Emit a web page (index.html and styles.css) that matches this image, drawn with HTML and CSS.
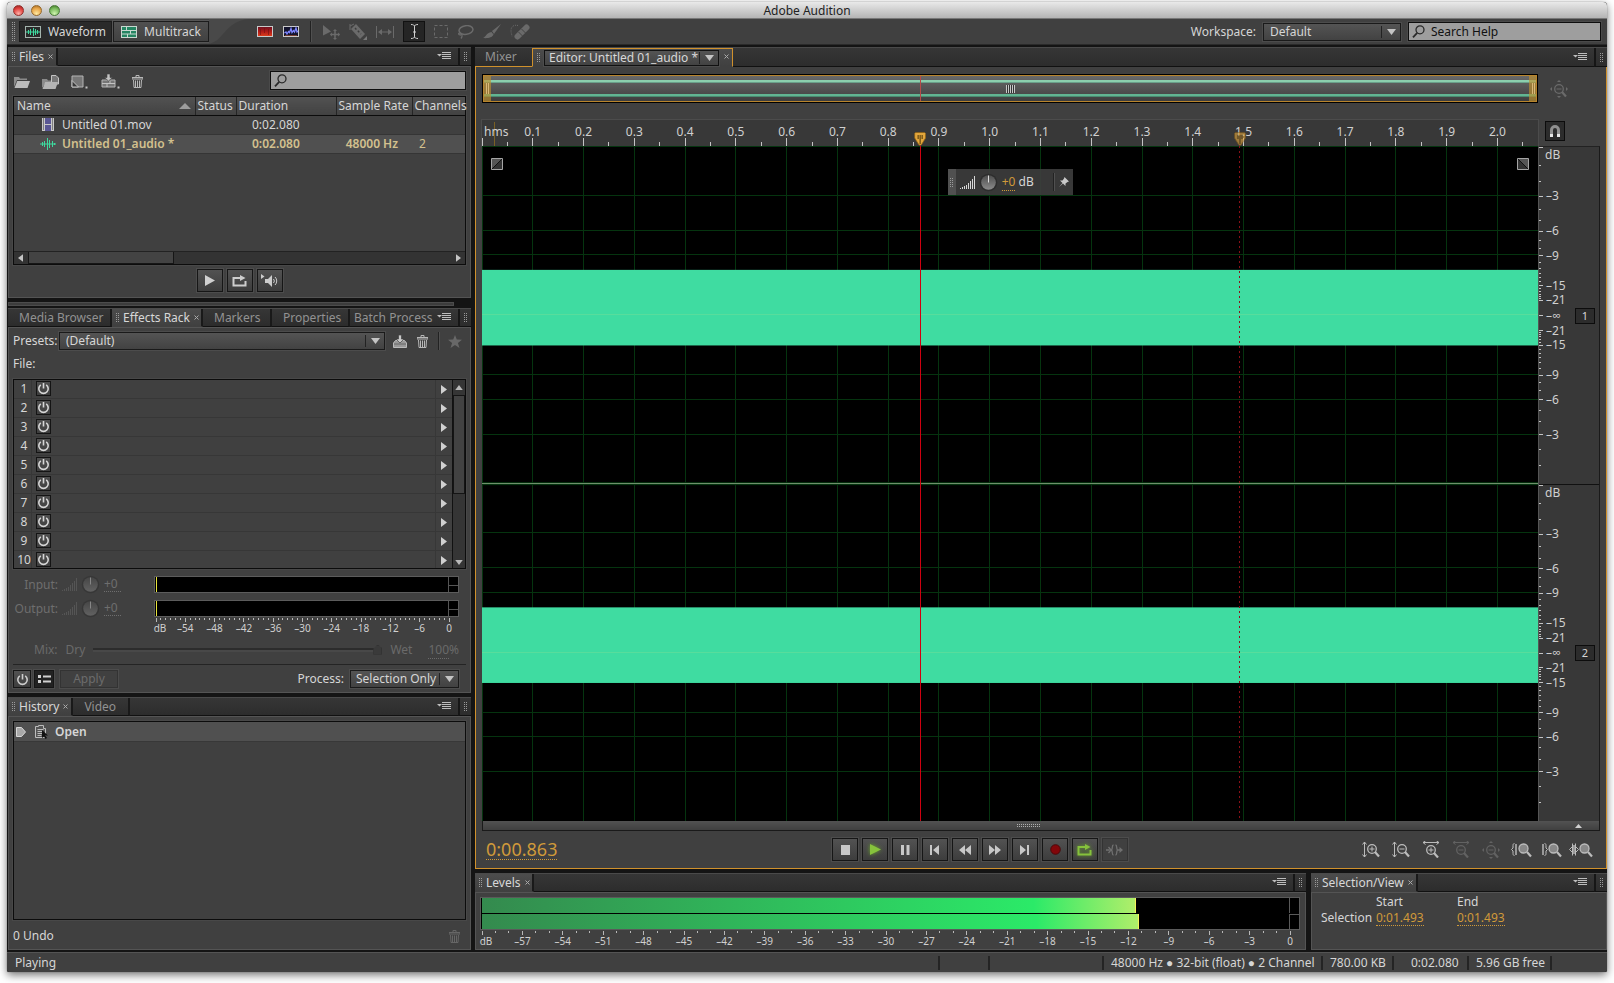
FILE: index.html
```html
<!DOCTYPE html>
<html lang="en">
<head>
<meta charset="utf-8">
<title>Adobe Audition</title>
<link rel="stylesheet" href="styles.css">
</head>
<body>
<svg class="sprite" aria-hidden="true">
  <defs>
    <linearGradient id="g-knob" x1="0" y1="0" x2="0" y2="1"><stop offset="0" stop-color="#4e4e4e"/><stop offset="1" stop-color="#8c8c8c"/></linearGradient>
    <linearGradient id="g-fire" x1="0" y1="0" x2="0" y2="1"><stop offset="0" stop-color="#6a1020"/><stop offset=".5" stop-color="#b01a18"/><stop offset="1" stop-color="#e0401c"/></linearGradient>
  </defs>
  <symbol id="i-menu" viewBox="0 0 14 8"><path d="M0 2h5L2.500 4.500z" fill="#bdbdbd"/><path d="M5 .5h9M5 2.500h9M5 4.500h9M5 6.500h9" stroke="#bdbdbd"/></symbol>
  <symbol id="i-down" viewBox="0 0 9 6"><path d="M0 0h9L4.500 6z" fill="currentColor"/></symbol>
  <symbol id="i-right" viewBox="0 0 6 9"><path d="M0 0v9L6 4.500z" fill="currentColor"/></symbol>
  <symbol id="i-left" viewBox="0 0 6 9"><path d="M6 0v9L0 4.500z" fill="currentColor"/></symbol>
  <symbol id="i-up" viewBox="0 0 9 6"><path d="M0 6h9L4.500 0z" fill="currentColor"/></symbol>
  <symbol id="i-close" viewBox="0 0 5 5"><path d="M.5.500l4 4M4.500.500l-4 4" stroke="currentColor" fill="none"/></symbol>
  <symbol id="i-search" viewBox="0 0 13 13"><circle cx="8" cy="4.800" r="4" fill="none" stroke="#2a2a2a" stroke-width="1.300"/><path d="M5.200 7.800L1 12.300" stroke="#2a2a2a" stroke-width="1.800"/></symbol>
  <symbol id="i-power" viewBox="0 0 13 13"><path d="M3.800 2.800a4.700 4.700 0 1 0 5.400 0" fill="none" stroke="currentColor" stroke-width="1.600"/><path d="M6.500 1v5.500" stroke="currentColor" stroke-width="1.600"/></symbol>
  <symbol id="i-trash" viewBox="0 0 11 13"><path d="M4 2V.5h3V2M0 2.500h11v1.500H0z" fill="none" stroke="currentColor"/><path d="M1.500 5l.5 7.500h7l.5-7.500" fill="none" stroke="currentColor"/><path d="M3.500 5.500v6.500M5.500 5.500v6.500M7.500 5.500v6.500" stroke="currentColor"/></symbol>
  <symbol id="i-wave" viewBox="0 0 16 12"><path d="M0 6h16" stroke="#3ddb9f"/><path d="M2.500 4v4M4.500 3v6M7.500 0v12M9.500 2v8M12.500 3v6M14.500 5v2" stroke="#3ddb9f"/></symbol>
  <symbol id="i-open" viewBox="0 0 16 13"><path d="M0 12V2h5l1 1.500h7V5H3z" fill="#8b8b8b"/><path d="M3.200 6H16l-2.500 7H.5z" fill="#bcbcbc"/></symbol>
  <symbol id="i-import" viewBox="0 0 17 14"><path d="M0 13V4h5l1 1.500h4V9H3z" fill="#8b8b8b"/><path d="M9.500.5H14l2.500 2.500V9h-7z" fill="#777" stroke="#c4c4c4"/><path d="M3.200 7H16l-2.500 7H.5z" fill="#b4b4b4"/></symbol>
  <symbol id="i-new" viewBox="0 0 18 14"><path d="M1 1h11v11H1z" fill="#777" stroke="#b4b4b4"/><path d="M1 5.500l6.500 6.500H1z" fill="#3a3a3a" stroke="#c4c4c4"/><path d="M14.500 11.500h2v2h-2z" fill="#c4c4c4"/></symbol>
  <symbol id="i-insert" viewBox="0 0 19 15"><path d="M1 6h13v7H1z" fill="#777" stroke="#b4b4b4"/><path d="M1 9.500h13M6 10v3M9 7v2" stroke="#c4c4c4"/><path d="M6 0h3v3.500h2.500L7.500 7 3.500 3.500H6z" fill="#c4c4c4" stroke="#404040" stroke-width=".6"/><path d="M16.500 12.500h2v2h-2z" fill="#c4c4c4"/></symbol>
  <symbol id="i-save" viewBox="0 0 14 13"><path d="M.5 8l2-2.500h9l2 2.500v4.500H.5z" fill="#999" stroke="#bbb"/><path d="M1 9h12" stroke="#666"/><path d="M5.500 0h3v4H11L7 8 3 4h2.500z" fill="#c8c8c8" stroke="#404040" stroke-width=".7"/></symbol>
  <symbol id="i-star" viewBox="0 0 14 13"><path d="M7 0l1.800 4.600 5.200.200-4.100 3.100L11.500 13 7 10.100 2.500 13l1.600-5.100L0 4.800l5.200-.200z" fill="#686868"/></symbol>
  <symbol id="i-film" viewBox="0 0 12 13"><path d="M0 0h12v13H0z" fill="#c9c9c9"/><path d="M3 0h6v6H3zM3 7h6v6H3z" fill="#5a5794"/><path d="M1.500 .5v12M10.500 .5v12" stroke="#333" stroke-dasharray="1 1"/></symbol>
  <symbol id="i-loop" viewBox="0 0 16 12"><path d="M5 3H1.500v7.500h12V6" fill="none" stroke="currentColor" stroke-width="2"/><path d="M5 3h5" stroke="currentColor" stroke-width="2"/><path d="M8 0l5.500 3L8 6z" fill="currentColor"/></symbol>
  <symbol id="i-speaker" viewBox="0 0 18 14"><path d="M0 0v5l3.500-2.500z" fill="currentColor"/><path d="M4 5h3l4-4v12L7 9H4z" fill="currentColor"/><path d="M12.500 5a3 3 0 0 1 0 4M14 3a5.500 5.500 0 0 1 0 8" fill="none" stroke="currentColor"/></symbol>
  <symbol id="i-vol" viewBox="0 0 15 13"><path d="M.5 12v1M2.500 11v2M4.500 10v3M6.500 9v4M8.500 7v6M10.500 5v8M12.500 3v10M14.500 0v13" stroke="currentColor"/></symbol>
  <symbol id="i-knob" viewBox="0 0 19 19"><circle cx="9.500" cy="9.500" r="8.800" fill="#2d2d2d"/><circle cx="9.500" cy="9.500" r="7.300" fill="url(#g-knob)"/><path d="M9.500 2.500v7" stroke="#ddd"/></symbol>
  <symbol id="i-fade" viewBox="0 0 12 12"><path d="M.5.500h11v11H.5z" fill="#333" stroke="#a5a5a5"/><path d="M1 1h10L1 11z" fill="#555"/><path d="M1 11L11 1" stroke="#111"/></symbol>
  <symbol id="i-zin" viewBox="0 0 18 17"><path d="M2.500 1v15M.500 3.500l2-2.500 2 2.500M.500 13.500l2 2.500 2-2.500" fill="none" stroke="currentColor"/><circle cx="10" cy="8" r="4.300" fill="none" stroke="currentColor" stroke-width="1.300"/><path d="M13 11l4 4.500" stroke="currentColor" stroke-width="2.200"/><path d="M7.500 8h5M10 5.500v5" stroke="currentColor"/></symbol>
  <symbol id="i-zout" viewBox="0 0 18 17"><path d="M2.500 1v15M.500 3.500l2-2.500 2 2.500M.500 13.500l2 2.500 2-2.500" fill="none" stroke="currentColor"/><circle cx="10" cy="8" r="4.300" fill="none" stroke="currentColor" stroke-width="1.300"/><path d="M13 11l4 4.500" stroke="currentColor" stroke-width="2.200"/><path d="M7.500 8h5" stroke="currentColor"/></symbol>
  <symbol id="i-hin" viewBox="0 0 18 17"><path d="M1 1.500h16M3.500 0L1 1.500 3.500 3.500M14.500 0L17 1.500l-2.500 2" fill="none" stroke="currentColor"/><circle cx="9" cy="9" r="4.300" fill="none" stroke="currentColor" stroke-width="1.300"/><path d="M12 12l4 4.500" stroke="currentColor" stroke-width="2.200"/><path d="M6.500 9h5M9 6.500v5" stroke="currentColor"/></symbol>
  <symbol id="i-hout" viewBox="0 0 18 17"><path d="M1 1.500h16M3.500 0L1 1.500 3.500 3.500M14.500 0L17 1.500l-2.500 2" fill="none" stroke="currentColor"/><circle cx="9" cy="9" r="4.300" fill="none" stroke="currentColor" stroke-width="1.300"/><path d="M12 12l4 4.500" stroke="currentColor" stroke-width="2.200"/><path d="M6.500 9h5" stroke="currentColor"/></symbol>
  <symbol id="i-zfull" viewBox="0 0 18 18"><path d="M9 0l2 2H7zM9 18l2-2H7zM0 9l2-2v4zM18 9l-2-2v4z" fill="currentColor"/><circle cx="9" cy="9" r="4.300" fill="none" stroke="currentColor" stroke-width="1.300"/><path d="M12 12l4 4.500" stroke="currentColor" stroke-width="2.200"/><path d="M6.500 9h5" stroke="currentColor"/></symbol>
  <symbol id="i-zsel1" viewBox="0 0 21 17"><path d="M3.500 2.500c-1 0-1.500.500-1.500 2v2.500L.5 8.500 2 10v2.500c0 1.500.5 2 1.500 2" stroke="currentColor" fill="none"/><path d="M4 3h2v11H4z" fill="#999"/><circle cx="12.500" cy="7.500" r="4.500" fill="#888" stroke="currentColor" stroke-width="1.300"/><path d="M16 11l4 4.500" stroke="currentColor" stroke-width="2.200"/></symbol>
  <symbol id="i-zsel2" viewBox="0 0 21 17"><path d="M3.500 2.500c1 0 1.500.500 1.500 2v2.500L6.500 8.500 5 10v2.500c0 1.500-.5 2-1.500 2" stroke="currentColor" fill="none"/><path d="M1 3h2v11H1z" fill="#999"/><circle cx="12.500" cy="7.500" r="4.500" fill="#888" stroke="currentColor" stroke-width="1.300"/><path d="M16 11l4 4.500" stroke="currentColor" stroke-width="2.200"/></symbol>
  <symbol id="i-zsel3" viewBox="0 0 24 17"><path d="M3.500 2.500v12M6.500 2.500v12M3 6L.5 8.500 3 11M7 6l2.500 2.500L7 11" stroke="currentColor" fill="none"/><path d="M4 4h2v9H4z" fill="#999"/><circle cx="15.500" cy="7.500" r="4.500" fill="#888" stroke="currentColor" stroke-width="1.300"/><path d="M19 11l4 4.500" stroke="currentColor" stroke-width="2.200"/></symbol>
  <symbol id="i-marker" viewBox="0 0 12 14"><path d="M1.500.500h9l1 1V6L7.500 12.500l-1.500 1-1.500-1L.5 6V1.500z" fill="#e2a63c" stroke="#8a5f14" stroke-width=".8"/><path d="M4 3v4M6 3v9M8 3v4" stroke="#4a3408"/></symbol>
</svg>

<div class="window">
  <header class="titlebar">
    <span class="lights"><i class="light red"></i><i class="light amber"></i><i class="light green"></i></span>
    <h1>Adobe Audition</h1>
  </header>

  <div class="toolbar">
    <div class="modes">
      <i class="grip tall"></i>
      <button class="mode on"><svg width="16" height="12"><rect x=".5" y=".5" width="15" height="11" fill="none" stroke="#a5b5ae"/><path d="M1 6h14" stroke="#3ddb9f"/><path d="M3.500 4v4M5.500 3v6M8.500 2v8M10.500 3v6M12.500 4v4" stroke="#3ddb9f"/></svg>Waveform</button>
      <button class="mode"><svg width="16" height="12"><path d="M0 0h16v12H0z" fill="#c8d8d0"/><path d="M1 1h4v3H1zM6 1h9v3H6zM1 5h8v2.500H1zM10 5h5v2.500h-5zM1 8.500h5V11H1zM7 8.500h8V11H7z" fill="#258562"/></svg>Multitrack</button>
    </div>
    <svg class="swoosh" width="40" height="25"><path d="M0 25C16 21 16 2 40 0H0z" fill="#494949"/></svg>
    <button class="tool" aria-label="Spectral frequency"><svg width="16" height="11"><rect x=".5" y=".5" width="15" height="10" fill="url(#g-fire)" stroke="#c9c9c9"/><path d="M3.500 3v6M7.500 2v5M11.500 3v6" stroke="#701010" stroke-opacity=".6"/></svg></button>
    <button class="tool wide" aria-label="Spectral pitch"><svg width="16" height="11"><rect x=".5" y=".5" width="15" height="10" fill="#14142e" stroke="#c9c9c9"/><path d="M1.500 7l1.500-1 1 2 1.500-2.500 1 1 1.500-4 1 4 1.500-2 1 1.500 1.500-4 1 4 1-1" fill="none" stroke="#7e86ff" stroke-width="1.300"/><path d="M2 9.500h12" stroke="#a05030" stroke-opacity=".7"/></svg></button>
    <i class="vsep"></i>
    <div class="tools">
      <button class="tool" aria-label="Move"><svg width="18" height="16"><path d="M1 1l8 6.500-8 4z" fill="#6a6a6a"/><path d="M13 6v9M8.500 10.500h9" stroke="#6a6a6a" stroke-width="1.500"/><path d="M13 5l2 2h-4zM13 16l2-2h-4zM8 10.500l2-2v4zM18 10.500l-2-2v4z" fill="#6a6a6a"/></svg></button>
      <button class="tool" aria-label="Razor"><svg width="18" height="17"><path d="M1 1v6M1 3l4-2" stroke="#6a6a6a"/><path d="M7 1l9 10-5 5-9-10z" fill="#6a6a6a"/><path d="M6 5l6 6" stroke="#3c3c3c" stroke-width="1.500" stroke-dasharray="2 2"/><path d="M18 13v4h-4z" fill="#777"/></svg></button>
      <button class="tool" aria-label="Time selection"><svg width="18" height="12"><path d="M.5 0v12M17.500 0v12M3 6h12" stroke="#6a6a6a"/><path d="M2 6l4-3v6zM16 6l-4-3v6z" fill="#6a6a6a"/></svg></button>
      <button class="tool on" aria-label="Text cursor"><svg width="9" height="15"><path d="M1 .500c2.500 0 3.500.800 3.500 2v10c0 1.200-1 2-3.500 2M8 .500c-2.500 0-3.500.800-3.500 2v10c0 1.200 1 2 3.500 2M3 8h3" fill="none" stroke="#d2d2d2"/></svg></button>
      <button class="tool" aria-label="Marquee"><svg width="14" height="13"><rect x=".5" y=".5" width="13" height="12" fill="none" stroke="#6a6a6a" stroke-dasharray="3 2"/></svg></button>
      <button class="tool" aria-label="Lasso"><svg width="17" height="14"><ellipse cx="9" cy="5" rx="7" ry="4.300" fill="none" stroke="#6a6a6a" stroke-width="1.500" transform="rotate(-8 9 5)"/><path d="M3 8c2 1 3 3 1 5.500M3 8c-2 0-2 2 1 2" fill="none" stroke="#6a6a6a" stroke-width="1.300"/></svg></button>
      <button class="tool" aria-label="Paintbrush"><svg width="18" height="15"><path d="M18 0L9 7l2 3z" fill="#6a6a6a"/><path d="M8.500 8l2 2.500C9 14 4 14.500 0 14c3-1 3-5 8.500-6z" fill="#6a6a6a"/></svg></button>
      <button class="tool" aria-label="Spot healing"><svg width="20" height="16"><path d="M7.500 12.500L16.500 3.500" stroke="#6a6a6a" stroke-width="6" stroke-linecap="round"/><path d="M8.500 8l4 4M11.500 5l4 4" stroke="#444"/><path d="M8 1.500c-4-1-7 1-7 5 0 3 1 4 1 6" fill="none" stroke="#6a6a6a" stroke-dasharray="1 1"/></svg></button>
    </div>
    <label class="ws-label" for="ws">Workspace:</label>
    <span class="sel ws"><select id="ws"><option>Default</option></select><svg width="9" height="6"><use href="#i-down"/></svg></span>
    <span class="search help"><svg width="13" height="13"><use href="#i-search"/></svg><input type="text" value="Search Help" aria-label="Search Help"></span>
  </div>

  <main class="workspace">
    <div class="side">
      <section class="panel files">
        <div class="tabbar"><a class="tab on" href="#files"><i class="grip"></i>Files<svg width="5" height="5"><use href="#i-close"/></svg></a><span class="fill"></span><button class="pmenu" aria-label="Panel menu"><svg width="14" height="8"><use href="#i-menu"/></svg></button><span class="endgrip"><i class="grip"></i></span></div>
        <div class="pbody" id="files">
          <div class="filetools">
            <button aria-label="Open"><svg width="16" height="13"><use href="#i-open"/></svg></button>
            <button aria-label="Import"><svg width="17" height="14"><use href="#i-import"/></svg></button>
            <button aria-label="New"><svg width="18" height="14"><use href="#i-new"/></svg></button>
            <button aria-label="Insert"><svg width="19" height="15"><use href="#i-insert"/></svg></button>
            <button aria-label="Delete"><svg width="11" height="13"><use href="#i-trash"/></svg></button>
            <span class="search"><svg width="13" height="13"><use href="#i-search"/></svg><input type="text" aria-label="Search files"></span>
          </div>
          <div class="well filelist">
            <table>
              <colgroup><col class="c-name"><col class="c-status"><col class="c-dur"><col class="c-rate"><col></colgroup>
              <thead><tr><th><span class="sorted">Name<svg width="12" height="6"><path d="M0 6h12L6 0z" fill="#9c9c9c"/></svg></span></th><th>Status</th><th>Duration</th><th>Sample Rate</th><th>Channels</th></tr></thead>
              <tbody>
                <tr><td><span class="fname"><svg width="12" height="13"><use href="#i-film"/></svg>Untitled 01.mov</span></td><td></td><td>0:02.080</td><td></td><td></td></tr>
                <tr class="sel-row"><td><span class="fname"><svg width="16" height="12"><use href="#i-wave"/></svg><b>Untitled 01_audio *</b></span></td><td></td><td><b>0:02.080</b></td><td><b>48000 Hz</b></td><td>2</td></tr>
              </tbody>
            </table>
            <div class="hscroll"><svg width="5" height="8"><use href="#i-left"/></svg><i class="thumb"></i><svg width="5" height="8"><use href="#i-right"/></svg></div>
          </div>
          <div class="playrow">
            <button class="btn" aria-label="Play"><svg width="10" height="11"><path d="M0 0v11l10-5.500z" fill="#d0d0d0"/></svg></button>
            <button class="btn" aria-label="Loop"><svg width="16" height="12"><use href="#i-loop"/></svg></button>
            <button class="btn" aria-label="Auto-play"><svg width="18" height="14"><use href="#i-speaker"/></svg></button>
          </div>
        </div>
      </section>
      <div class="tabscroll"><i></i></div>

      <section class="panel rack">
        <div class="tabbar"><a class="tab t-mb" href="#rack">Media Browser</a><a class="tab on" href="#rack"><i class="grip"></i>Effects Rack<svg width="5" height="5"><use href="#i-close"/></svg></a><a class="tab t-mk" href="#rack">Markers</a><a class="tab t-pr" href="#rack">Properties</a><a class="tab t-bp" href="#rack">Batch Process</a><button class="pmenu" aria-label="Panel menu"><svg width="14" height="8"><use href="#i-menu"/></svg></button><span class="endgrip"><i class="grip"></i></span></div>
        <div class="pbody" id="rack">
          <div class="presets">
            <label for="pre">Presets:</label>
            <span class="sel"><select id="pre"><option>(Default)</option></select><svg width="9" height="6"><use href="#i-down"/></svg></span>
            <button aria-label="Save preset"><svg width="14" height="13"><use href="#i-save"/></svg></button>
            <button aria-label="Delete preset"><svg width="11" height="13"><use href="#i-trash"/></svg></button>
            <i class="vsep"></i>
            <button aria-label="Favorite"><svg width="14" height="13"><use href="#i-star"/></svg></button>
          </div>
          <p class="file-label">File:</p>
          <div class="well slots">
            <ol id="slots"></ol>
            <div class="vscroll"><svg width="8" height="5"><use href="#i-up"/></svg><i class="thumb"></i><svg width="8" height="5"><use href="#i-down"/></svg></div>
          </div>
          <div class="gains">
            <span class="glabel">Input:</span><svg class="dim" width="15" height="13"><use href="#i-vol"/></svg><svg class="dimknob" width="19" height="19"><use href="#i-knob"/></svg><span class="dots">+0</span><div class="meter"><i></i><i></i><i></i><i></i></div>
            <span class="glabel">Output:</span><svg class="dim" width="15" height="13"><use href="#i-vol"/></svg><svg class="dimknob" width="19" height="19"><use href="#i-knob"/></svg><span class="dots">+0</span><div class="meter"><i></i><i></i><i></i><i></i></div>
            <svg class="scale rackscale" id="rackscale"></svg>
          </div>
          <div class="mix"><label for="mix">Mix:</label><span>Dry</span><input id="mix" type="range" value="100" disabled><span>Wet</span><span class="pct"><span class="dots">100</span>%</span></div>
          <div class="applyrow">
            <button class="btn sq" aria-label="Power"><svg width="13" height="13"><use href="#i-power"/></svg></button>
            <button class="btn sq on" aria-label="List view"><svg width="13" height="8"><path d="M0 0h3v3H0zM0 5h3v3H0zM5 .500h8v2H5zM5 5.500h8v2H5z" fill="#d0d0d0"/></svg></button>
            <button class="btn apply" disabled>Apply</button>
            <label for="proc">Process:</label>
            <span class="sel proc"><select id="proc"><option>Selection Only</option></select><svg width="9" height="6"><use href="#i-down"/></svg></span>
          </div>
        </div>
      </section>

      <section class="panel history">
        <div class="tabbar"><a class="tab on" href="#hist"><i class="grip"></i>History<svg width="5" height="5"><use href="#i-close"/></svg></a><a class="tab t-vd" href="#hist">Video</a><span class="fill"></span><button class="pmenu" aria-label="Panel menu"><svg width="14" height="8"><use href="#i-menu"/></svg></button><span class="endgrip"><i class="grip"></i></span></div>
        <div class="pbody" id="hist">
          <div class="well histlist">
            <div class="hrow"><svg width="10" height="10"><path d="M.5.500h5l4 4.500-4 4.500h-5z" fill="#a8a8a8" stroke="#d8d8d8"/></svg><svg width="13" height="14"><path d="M.5 1.500h3v-1h5v3h2v9H.5z" fill="#555" stroke="#bdbdbd"/><path d="M2.500 4.500h6M2.500 6.500h5M2.500 8.500h5M2.500 10.500h4" stroke="#bdbdbd"/><path d="M7 5v8l2-1.500L10.500 14l1.500-1-1.500-2.500H13z" fill="#111"/></svg><b>Open</b></div>
          </div>
          <div class="undo"><span>0 Undo</span><svg width="11" height="13"><use href="#i-trash"/></svg></div>
        </div>
      </section>
    </div>

    <div class="center">
      <section class="panel editor">
        <div class="tabbar"><a class="tab t-mx" href="#ed">Mixer</a><div class="tab on edtab"><i class="grip"></i><span class="sel"><select aria-label="Editor file"><option>Editor: Untitled 01_audio *</option></select><svg width="9" height="6"><use href="#i-down"/></svg></span><svg width="5" height="5"><use href="#i-close"/></svg></div><span class="fill"></span><button class="pmenu" aria-label="Panel menu"><svg width="14" height="8"><use href="#i-menu"/></svg></button><span class="endgrip"><i class="grip"></i></span></div>
        <div class="pbody" id="ed">
          <div class="edgrid">
            <div class="overview">
              <i class="handle"></i><i class="ograb"></i><i class="handle"></i>
              <i class="ohead"></i>
            </div>
            <button class="zoomall" aria-label="Zoom out full"><svg width="18" height="18"><use href="#i-zfull"/></svg></button>
            <svg class="ruler" id="ruler"></svg>
            <button class="snap" aria-label="Snap"><svg width="10" height="12"><path d="M1.500 9V5a3.500 3.500 0 0 1 7 0v4" fill="none" stroke="#909090" stroke-width="3"/><path d="M0 9h3v3H0zM7 9h3v3H7z" fill="#e8e8e8"/></svg></button>
            <div class="waves">
              <svg class="grid" id="grid"></svg>
              <svg class="fade l" width="12" height="12"><use href="#i-fade"/></svg>
              <svg class="fade r" width="12" height="12"><use href="#i-fade"/></svg>
              <div class="hud"><span class="hgrip"><i class="grip"></i></span><svg width="15" height="13"><use href="#i-vol"/></svg><svg width="19" height="19"><use href="#i-knob"/></svg><span><span class="dots gold">+0</span> dB</span><i class="vsep"></i><svg width="10" height="10"><path d="M5.500 0L10 4.500l-1.500.5L6.500 6.500 6.500 9 4 6.500 0 10 3.500 6 1 3.500h2.500L5 1.500z" fill="#c8c8c8"/></svg></div>
            </div>
            <div class="dbcol">
              <div class="dbch"><svg class="dbs"></svg><button>1</button></div>
              <div class="dbch"><svg class="dbs"></svg><button>2</button></div>
            </div>
            <div class="wscroll"><i></i><svg width="7" height="4"><path d="M0 4h7L3.500 0z" fill="#d0d0d0"/></svg></div>
          </div>
          <div class="transport">
            <output class="time"><span class="dots gold">0:00.863</span></output>
            <div class="tbtns">
              <button class="btn" aria-label="Stop"><svg width="9" height="10"><path d="M0 0h9v10H0z" fill="#c8c8c8"/></svg></button>
              <button class="btn" aria-label="Play"><svg class="glow" width="11" height="11"><path d="M0 0v11l11-5.500z" fill="#86c23c"/></svg></button>
              <button class="btn" aria-label="Pause"><svg width="9" height="10"><path d="M0 0h3v10H0zM5.500 0h3v10h-3z" fill="#c8c8c8"/></svg></button>
              <button class="btn" aria-label="To start"><svg width="10" height="10"><path d="M0 0h2v10H0zM9 0v10L3 5z" fill="#c8c8c8"/></svg></button>
              <button class="btn" aria-label="Rewind"><svg width="12" height="10"><path d="M6 0v10L0 5zM12 0v10L6 5z" fill="#c8c8c8"/></svg></button>
              <button class="btn" aria-label="Forward"><svg width="12" height="10"><path d="M0 0v10l6-5zM6 0v10l6-5z" fill="#c8c8c8"/></svg></button>
              <button class="btn" aria-label="To end"><svg width="10" height="10"><path d="M0 0v10l6-5zM7 0h2v10H7z" fill="#c8c8c8"/></svg></button>
              <button class="btn" aria-label="Record"><svg width="11" height="11"><circle cx="5.500" cy="5.500" r="4.800" fill="#82060a" stroke="#4a0a0c"/></svg></button>
              <button class="btn lit" aria-label="Loop playback"><svg class="glow" width="16" height="12"><use href="#i-loop"/></svg></button>
              <button class="btn off" aria-label="Skip selection" disabled><svg width="18" height="12"><path d="M0 6h3.500M2.500 3L5 6 2.500 9M7.500 1c-2 0-.5 3.500-2 5 1.500 1.500 0 5 2 5M9.500 1c2 0 .5 3.500 2 5-1.500 1.500 0 5-2 5M12 6h3" stroke="#707070" fill="none" stroke-width="1.300"/><path d="M13.500 3L17 6l-3.500 3z" fill="#707070"/></svg></button>
            </div>
            <div class="zooms">
              <button aria-label="Zoom in amplitude"><svg width="18" height="17"><use href="#i-zin"/></svg></button>
              <button aria-label="Zoom out amplitude"><svg width="18" height="17"><use href="#i-zout"/></svg></button>
              <button aria-label="Zoom in time"><svg width="18" height="17"><use href="#i-hin"/></svg></button>
              <button class="off" aria-label="Zoom out time"><svg width="18" height="17"><use href="#i-hout"/></svg></button>
              <button class="off" aria-label="Zoom out full"><svg width="18" height="18"><use href="#i-zfull"/></svg></button>
              <button aria-label="Zoom to in point"><svg width="21" height="17"><use href="#i-zsel1"/></svg></button>
              <button aria-label="Zoom to out point"><svg width="21" height="17"><use href="#i-zsel2"/></svg></button>
              <button aria-label="Zoom to selection"><svg width="24" height="17"><use href="#i-zsel3"/></svg></button>
            </div>
          </div>
        </div>
      </section>

      <div class="bottom">
        <section class="panel levels">
          <div class="tabbar"><a class="tab on" href="#lev"><i class="grip"></i>Levels<svg width="5" height="5"><use href="#i-close"/></svg></a><span class="fill"></span><button class="pmenu" aria-label="Panel menu"><svg width="14" height="8"><use href="#i-menu"/></svg></button><span class="endgrip"><i class="grip"></i></span></div>
          <div class="pbody" id="lev">
            <div class="lmeter"><div class="bar"><i style="width:81%"></i></div><b></b><div class="bar"><i style="width:81.4%"></i></div><b></b></div>
            <svg class="scale levscale" id="levscale"></svg>
          </div>
        </section>
        <section class="panel selview">
          <div class="tabbar"><a class="tab on" href="#sv"><i class="grip"></i>Selection/View<svg width="5" height="5"><use href="#i-close"/></svg></a><span class="fill"></span><button class="pmenu" aria-label="Panel menu"><svg width="14" height="8"><use href="#i-menu"/></svg></button><span class="endgrip"><i class="grip"></i></span></div>
          <div class="pbody" id="sv">
            <div class="svgrid"><span></span><span class="svh">Start</span><span>End</span><span>Selection</span><span class="dots gold">0:01.493</span><span class="dots gold">0:01.493</span></div>
          </div>
        </section>
      </div>
    </div>
  </main>

  <footer class="status"><span class="st-main">Playing</span><span class="st s1"></span><span class="st s2"></span><span class="st s3">48000 Hz ● 32-bit (float) ● 2 Channel</span><span class="st s4">780.00 KB</span><span class="st s5">0:02.080</span><span class="st s6">5.96 GB free</span><span class="st s7"></span></footer>
</div>
<script src="app.js"></script>
</body>
</html>
```

FILE: styles.css
```css
* { box-sizing: border-box; }
html { height: 100%; background: #fff; }
body {
  margin: 0; height: 100%; padding: 2px 7px 11px;
  font: 12px/14px "Noto Sans", "Open Sans", sans-serif; color: #d6d6d6;
}
button, select, input { font: inherit; color: inherit; margin: 0; padding: 0; }
button { background: none; border: 0; display: flex; align-items: center; justify-content: center; }
input, select { outline: 0; }
a { color: inherit; text-decoration: none; }
svg { display: block; flex: none; }
p { margin: 0; }
.sprite { position: absolute; width: 0; height: 0; }

.window {
  height: 100%; min-height: 900px; min-width: 1300px; display: flex; flex-direction: column;
  background: #141414; border-radius: 4px 4px 2px 2px; overflow: clip;
  box-shadow: 0 0 1px #555, 0 3px 8px rgba(0, 0, 0, .55);
}
.titlebar {
  height: 17px; flex: none; display: grid; grid-template-columns: 1fr auto 1fr; align-items: center;
  background: linear-gradient(#e9e9e9, #b4b4b4); border-bottom: 1px solid #777; color: #222;
}
.titlebar h1 { margin: 0; padding-top: 1px; font-size: 12px; font-weight: 400; line-height: 16px; }
.lights { display: flex; gap: 7px; padding-left: 6px; }
.light { width: 11px; height: 11px; border-radius: 50%; border: 1px solid #555; }
.red { background: radial-gradient(circle at 50% 85%, #ffb0a8, #e0403c 60%, #8a2320); border-color: #94302c; }
.amber { background: radial-gradient(circle at 50% 85%, #ffe9a0, #e8a548 60%, #9a6420); border-color: #94682c; }
.green { background: radial-gradient(circle at 50% 85%, #d0f5b0, #78b95c 60%, #3c7020); border-color: #4a7a3a; }

.toolbar { height: 26px; flex: none; display: flex; align-items: center; background: #404040; border-bottom: 1px solid #2a2a2a; padding-right: 6px; }
.modes { display: flex; align-items: center; align-self: stretch; background: linear-gradient(#414141, #494949); padding-left: 5px; gap: 1px; }
.mode { height: 21px; gap: 7px; border: 1px solid #1c1c1c; background: linear-gradient(#505050, #414141); width: 96px; box-shadow: 0 0 0 1px #555; }
.mode.on { background: #2a2a2a; width: 93px; box-shadow: none; }
.swoosh { margin-right: 8px; }
.tool { height: 21px; flex: none; }
.tool.wide { margin-left: 10px; }
.vsep { width: 2px; height: 18px; flex: none; background: #222; border-right: 1px solid #505050; }
.toolbar > .vsep { margin: 0 10px 0 11px; height: 21px; }
.tools { display: flex; gap: 9px; align-items: center; }
.tool.on { width: 22px; background: #252525; border: 1px solid #111; }
.ws-label { margin: 0 7px 0 auto; }
.ws { width: 138px; }
.search { display: flex; align-items: center; height: 19px; background: #9e9e9e; border: 1px solid #0e0e0e; box-shadow: 0 0 0 1px #4a4a4a; padding-left: 3px; gap: 6px; }
.search input { flex: 1; min-width: 0; border: 0; background: none; color: #111; }
.help { width: 193px; margin-left: 7px; }

.sel { display: grid; height: 18px; align-items: center; background: linear-gradient(#545454, #424242); border: 1px solid #1a1a1a; box-shadow: 0 0 0 1px #4c4c4c; }
.sel select { grid-area: 1 / 1; appearance: none; border: 0; background: none; width: 100%; height: 16px; padding: 0 22px 0 6px; line-height: 16px; }
.sel option { background: #404040; }
.sel > svg { grid-area: 1 / 1; justify-self: end; box-sizing: content-box; padding: 3px 4px 3px 5px; border-left: 1px solid #222; color: #c4c4c4; pointer-events: none; }

.grip { width: 3px; height: 9px; flex: none; background: conic-gradient(at 1px 1px, transparent 75%, #9a9a9a 0) 0 0 / 2px 2px; }
.grip.tall { width: 4px; height: 19px; margin-right: 2px; }

.workspace { flex: 1; min-height: 0; display: grid; grid-template-columns: minmax(463px, 28%) minmax(0, 1fr); gap: 4px; padding: 2px 0 2px 1px; }
.side { display: flex; flex-direction: column; min-width: 0; min-height: 0; }
.center { display: flex; flex-direction: column; gap: 4px; min-width: 0; min-height: 0; }
.panel { display: flex; flex-direction: column; min-width: 0; }
.pbody { flex: 1; background: #404040; border: 1px solid #545454; min-height: 0; display: flex; flex-direction: column; }
.tabbar { display: flex; height: 19px; flex: none; background: linear-gradient(#363636, #2c2c2c); border-top: 1px solid #4a4a4a; }
.tab { display: flex; align-items: center; padding: 0 11px; color: #929292; border-right: 2px solid #191919; border-bottom: 1px solid #111; white-space: nowrap; background: linear-gradient(#363636, #2c2c2c); line-height: 16px; }
.tab.on { color: #d8d8d8; background: linear-gradient(#4c4c4c, #404040); border-bottom-color: #404040; padding: 0 3px 0 4px; gap: 4px; }
.tab.on > svg { color: #aaa; }
.fill { flex: 1; border-bottom: 1px solid #111; }
.pmenu { width: 27px; flex: none; border-bottom: 1px solid #111; padding: 0 1px 1px 0; }
.endgrip { width: 13px; flex: none; display: flex; align-items: center; justify-content: center; border-left: 2px solid #161616; border-bottom: 1px solid #111; }
.well { border: 1px solid #0c0c0c; background: #404040; box-shadow: 0 0 0 1px #484848; }
.btn { width: 26px; height: 23px; background: linear-gradient(#525252, #3d3d3d); border: 1px solid #161616; box-shadow: 0 0 0 1px #4c4c4c; color: #cdcdcd; }
.btn.lit { color: #86c23c; }

.files { height: 251px; flex: none; }
.files .pbody { padding: 0 4px; }
.filetools { display: flex; align-items: center; height: 29px; flex: none; gap: 12px; padding-left: 1px; color: #b8b8b8; }
.filetools .search { width: 196px; margin-left: auto; margin-bottom: 2px; }
.filelist { height: 169px; flex: none; display: flex; flex-direction: column; justify-content: space-between; }
table { width: 100%; table-layout: fixed; border-collapse: collapse; }
.c-name { width: 181px; } .c-status { width: 41px; } .c-dur { width: 100px; } .c-rate { width: 76px; }
th { text-align: left; font-weight: 400; height: 18px; padding: 0 0 0 3px; white-space: nowrap; background: linear-gradient(#525252, #424242); border-bottom: 1px solid #0c0c0c; line-height: 14px; }
th + th { border-left: 1px solid #252525; padding-left: 2px; }
.sorted { display: flex; align-items: center; justify-content: space-between; padding-right: 4px; }
td { height: 19px; padding: 0; line-height: 16px; border-bottom: 1px solid #353535; white-space: nowrap; }
td:nth-child(3) { padding-left: 16px; }
td:nth-child(4) { text-align: right; padding-right: 14px; }
td:nth-child(5) { padding-left: 7px; }
.fname { display: grid; grid-template-columns: 16px auto; gap: 6px; align-items: center; justify-items: center; justify-content: start; padding-left: 26px; }
.sel-row { background: #505050; color: #d3c08e; }
b { font-weight: 600; }
.hscroll { height: 13px; display: flex; align-items: center; background: #333; border-top: 1px solid #222; padding: 0 4px; color: #c4c4c4; }
.hscroll .thumb { width: 33%; height: 12px; margin: 0 auto 0 5px; background: #434343; border: 1px solid #161616; border-top: 0; }
.playrow { display: flex; justify-content: center; gap: 4px; padding-top: 4px; }
.tabscroll { height: 10px; flex: none; padding: 4px 17px 2px 0; }
.tabscroll i { display: block; height: 4px; background: #3c3c3c; border: 1px solid #4c4c4c; }

.rack { flex: none; }
.rack .pbody { padding: 4px 4px 4px; }
.t-mb { width: 104px; } .rack .tab.on { width: 91px; } .t-mk { width: 69px; } .t-pr { width: 78px; }
.t-bp { flex: 1; min-width: 0; padding: 0 0 0 4px; border-right: 0; }
.presets { display: flex; align-items: center; color: #b8b8b8; }
.presets label { color: #d6d6d6; width: 46px; }
.presets .sel { flex: 1; color: #d6d6d6; margin-right: 8px; }
.presets button { margin-right: 10px; }
.presets .vsep { margin-right: 8px; }
.presets button:last-child { margin-right: 4px; }
.file-label { padding: 7px 0 8px; }
.slots { display: flex; height: 190px; overflow: clip; }
.slots ol { flex: 1; list-style: none; margin: 0; padding: 0; }
.slots li { display: grid; grid-template-columns: 18px 1fr 17px; height: 19px; border-bottom: 1px solid #373737; align-items: stretch; }
.slots .n { line-height: 18px; border-right: 1px solid #373737; padding-left: 3px; text-align: center; white-space: nowrap; }
.slots li button.pw { width: 15px; height: 15px; margin: 1px 0 0 4px; background: linear-gradient(#505050, #3e3e3e); border: 1px solid #141414; }
.slots li .go { border-left: 1px solid #373737; color: #d0d0d0; }
.vscroll { width: 13px; background: #353535; border-left: 1px solid #111; display: flex; flex-direction: column; align-items: center; padding: 5px 0 3px; color: #b8b8b8; }
.vscroll .thumb { width: 12px; height: 99px; margin: 5px 0 auto; background: #424242; border: 1px solid #141414; }
.gains { display: grid; grid-template-columns: 45px 15px 19px 17px 1fr; column-gap: 4px; row-gap: 5px; align-items: center; padding: 6px 7px 0 0; color: #6e6e6e; }
.glabel { text-align: right; }
.dim { color: #555; }
.dimknob { opacity: .45; }
.dots { border-bottom: 1px dotted currentColor; line-height: 14px; }
.gold { color: #d09a3a; }
.meter { display: grid; grid-template-columns: 1fr 9px; grid-template-rows: 1fr 1fr; gap: 0 1px; height: 17px; background: #555; border: 1px solid #5c5c5c; margin-left: 29px; }
.meter i { background: #000; }
.meter i:nth-child(odd) { box-shadow: inset 1px 0 #000, inset 2px 0 #e8e43c; }
.meter i:nth-child(4) { border-top: 1px solid #555; }
.scale { overflow: visible; fill: #d0d0d0; stroke: none; font-size: 10px; }
.scale line { stroke: #b8b8b8; shape-rendering: crispEdges; }
.rackscale { grid-column: 5; margin: -6px 0 0 31px; width: calc(100% - 41px); height: 18px; }
.mix { display: flex; align-items: center; color: #6a6a6a; gap: 8px; padding: 0 7px 0 21px; height: 29px; }
.mix input { flex: 1; min-width: 0; appearance: none; height: 10px; background: linear-gradient(transparent 3px, #2c2c2c 3px 5px, #484848 5px 7px, transparent 7px); }
.mix input::-webkit-slider-thumb { appearance: none; width: 9px; height: 10px; background: #3a3a3a; border: 1px solid #333; clip-path: polygon(50% 0, 100% 40%, 100% 100%, 0 100%, 0 40%); }
.mix .pct { margin-left: 8px; }
.applyrow { display: flex; align-items: center; border-top: 1px solid #242424; padding-top: 5px; }
.applyrow .sq { width: 18px; height: 18px; margin-right: 3px; }
.applyrow .sq.on { width: 20px; background: #222; }
.applyrow .apply { width: 58px; height: 18px; margin-left: 3px; color: #6c6c6c; background: #404040; border-color: #333; }
.applyrow label { margin: 0 6px 0 auto; }
.proc { margin-right: 7px; }
.proc select { padding: 0 21px 0 5px; }

.history { flex: 1; min-height: 0; margin-top: 4px; }
.history .pbody { padding: 4px; }
.t-vd { width: 57px; }
.histlist { flex: 1; min-height: 0; }
.hrow { display: flex; align-items: center; height: 20px; background: #505050; border-bottom: 1px solid #383838; padding-left: 2px; }
.hrow svg + svg { margin: 0 7px 0 9px; }
.undo { display: flex; justify-content: space-between; align-items: center; padding: 9px 6px 2px 0; }
.undo svg { color: #666; }

.editor { flex: 1; min-height: 0; }
.editor .pbody { border-color: #d0912c; padding: 7px 6px 0; }
.t-mx { width: 57px; padding: 0 10px; border-right: 0; border-bottom-color: #d0912c; }
.editor .tabbar { height: 20px; margin-bottom: -1px; z-index: 1; position: relative; }
.editor .edtab { border: 1px solid #d0912c; border-bottom-color: #404040; gap: 4px; width: 201px; padding: 0 2px 0 4px; }
.edtab .sel { flex: 1; height: 16px; border-color: #111; }
.edtab .sel select { height: 14px; line-height: 14px; padding: 0 0 0 4px; }
.edtab > svg:last-child { margin: 0 1px 2px 1px; }
.edgrid { flex: 1; min-height: 0; display: grid; grid-template-columns: minmax(0, 1fr) 62px; grid-template-rows: 29px 17px 26px minmax(0, 1fr) 10px; }
.overview { grid-area: 1 / 1; position: relative; display: flex; align-items: center; justify-content: space-between; border: 1px solid #000; outline: 1px solid #b8842c; outline-offset: -2px; background: linear-gradient(transparent 5px, #8ccfae 5px 7px, #6aa08a 7px 8px, transparent 8px 19px, #62b592 19px 21px, #4a8a70 21px 22px, transparent 22px), linear-gradient(#6a6a6a, #585858 40%, #3c3c3c); }
.handle { width: 8px; height: 27px; background: linear-gradient(90deg, transparent 3px, #d8b878 3px 4px, transparent 4px 5px, #d8b878 5px 6px, transparent 6px) 0 8px / 8px 11px no-repeat rgba(190, 145, 45, .65); }
.ograb { width: 9px; height: 8px; background: repeating-linear-gradient(90deg, #c8c8c8 0 1px, #333 1px 2px); }
.ohead { position: absolute; left: 41.500%; top: 1px; bottom: 1px; width: 1px; background: #b84a48; }
.zoomall { grid-area: 1 / 2; color: #6a6a6a; padding-right: 20px; }
.ruler { grid-area: 3 / 1; width: 100%; height: 26px; background: #383838; overflow: visible; fill: #d0d0d0; font-size: 12px; box-shadow: 0 0 0 1px #4c4c4c; }
.ruler line { stroke: #c4c4c4; shape-rendering: crispEdges; }
.snap { grid-area: 3 / 2; width: 20px; height: 20px; margin: 1px 0 0 7px; background: #2c2c2c; border: 1px solid #0c0c0c; }
.waves { grid-area: 4 / 1; position: relative; background: #000; overflow: clip; }
.grid { width: 100%; height: 100%; }
.grid line { shape-rendering: crispEdges; }
.g { stroke: #05340f; }
.fade { position: absolute; top: 12px; }
.fade.l { left: 9px; }
.fade.r { right: 9px; transform: scaleX(-1); }
.hud { position: absolute; left: 44.100%; top: 23px; height: 26px; width: 125px; display: flex; align-items: center; background: rgba(62, 62, 62, .9); gap: 4px; padding-right: 4px; }
.hgrip { width: 8px; align-self: stretch; background: #505050; display: flex; align-items: center; justify-content: center; }
.hud .vsep { margin: 0 0 0 auto; }
.dbcol { grid-area: 4 / 2; background: #383838; border-right: 1px solid #1a1a1a; border-top: 1px solid #222; border-left: 1px solid #555; display: grid; grid-template-rows: 1fr 1fr; }
.dbch { display: grid; grid-template-columns: 1fr 24px; align-items: center; }
.dbch + .dbch { border-top: 1px solid #111; }
.dbs { width: 100%; height: 100%; overflow: visible; fill: #d0d0d0; font-size: 12px; }
.dbs line { stroke: #c4c4c4; shape-rendering: crispEdges; }
.dbch button { width: 20px; height: 16px; border: 1px solid #0c0c0c; background: #2c2c2c; font-size: 11px; }
.wscroll { grid-area: 5 / 1 / 6 / 3; background: linear-gradient(#525252, #404040); border: 1px solid #1a1a1a; border-top: 0; display: grid; grid-template-columns: 1fr auto; align-items: center; padding-right: 17px; }
.wscroll i { width: 24px; height: 4px; justify-self: center; background: conic-gradient(at 1px 1px, transparent 75%, #b0b0b0 0) 0 0 / 2px 2px; }
.transport { display: grid; grid-template-columns: 350px auto 1fr; align-items: center; height: 37px; flex: none; }
.time { font-size: 18px; padding-left: 4px; }
.time .dots { display: inline-block; line-height: 20px; }
.tbtns { display: flex; gap: 4px; }
.tbtns .off { border-color: #333; background: #404040; }
.glow { filter: drop-shadow(0 0 2px #6ca82c); }
.zooms { display: flex; justify-content: flex-end; color: #bcbcbc; padding-right: 4px; }
.zooms button { width: 30px; }
.zooms .off { color: #626262; }

.bottom { height: 77px; flex: none; display: grid; grid-template-columns: minmax(0, 831fr) minmax(0, 296fr); gap: 5px; }
.levels .tab.on { width: 59px; }
.levels .pbody { padding: 4px 5px 0 4px; }
.lmeter { display: grid; grid-template-columns: 1fr 9px; grid-template-rows: 1fr 1fr; gap: 1px; height: 33px; background: #000; border: 1px solid #5a5a5a; padding-left: 1px; }
.lmeter .bar i { display: block; height: 100%; border-right: 1px solid #f4f25a; background: linear-gradient(90deg, #348a4e, #2bea68 84.500%, #b0ee6a); }
.lmeter b { border-left: 1px solid #5a5a5a; margin-left: -1px; }
.lmeter b:last-child { border-top: 1px solid #5a5a5a; }
.levscale { width: calc(100% - 12px); margin-left: 2px; height: 18px; }
.svgrid { display: grid; grid-template-columns: 55px 81px auto; justify-content: start; justify-items: start; row-gap: 2px; padding: 2px 0 0 9px; }
.svh { padding-left: 0; }

.status { height: 20px; flex: none; display: flex; align-items: center; background: #404040; border-top: 1px solid #545454; }
.st-main { flex: 1; padding-left: 8px; }
.st { height: 14px; border-left: 2px solid #242424; padding: 0 7px; white-space: nowrap; }
.s1 { width: 50px; } .s2 { width: 114px; } .s3 { width: 219px; } .s4 { width: 71px; }
.s5 { width: 75px; padding-left: 17px; } .s6 { width: 83px; } .s7 { width: 57px; }
```

FILE: app.js
```js
const NS = 'http://www.w3.org/2000/svg';

function add(parent, tag, attrs, text) {
  const el = document.createElementNS(NS, tag);
  for (const key in attrs) el.setAttribute(key, attrs[key]);
  if (text !== undefined) el.textContent = text;
  parent.appendChild(el);
  return el;
}

const pct = (value) => value.toFixed(3) + '%';

/* Effect slots */
const slots = document.getElementById('slots');
for (let n = 1; n <= 10; n++) {
  const li = document.createElement('li');
  li.innerHTML =
    '<span class="n">' + n + '</span>' +
    '<button class="pw" aria-label="Slot ' + n + ' power"><svg width="13" height="13"><use href="#i-power"/></svg></button>' +
    '<button class="go" aria-label="Slot ' + n + ' effects"><svg width="6" height="9"><use href="#i-right"/></svg></button>';
  slots.appendChild(li);
}

/* Level scales from -60 dB to 0 dB */
function meterScale(id, step, labelY) {
  const svg = document.getElementById(id);
  for (let db = -60; db <= 0; db++) {
    const x = pct((db + 60) / 60 * 100);
    const major = db % step === 0;
    add(svg, 'line', { x1: x, x2: x, y1: 1, y2: major ? 5 : 3 });
    if (major) {
      const label = db === -60 ? 'dB' : String(db).replace('-', '\u2013');
      add(svg, 'text', { x, y: labelY, dx: db === -60 ? 4 : 0, 'text-anchor': 'middle' }, label);
    }
  }
}
meterScale('rackscale', 6, 15);
meterScale('levscale', 3, 15);

/* Time ruler and grid */
const LENGTH = 2.08;
const ruler = document.getElementById('ruler');
const grid = document.getElementById('grid');
const at = (seconds) => pct(seconds / LENGTH * 100);

add(ruler, 'line', { x1: 12, x2: 12, y1: 2, y2: 26, style: 'stroke:#7a6024' });
for (let i = 0; i <= 41; i++) {
  const x = at(i * 0.05);
  const major = i % 2 === 0;
  add(ruler, 'line', { x1: x, x2: x, y1: major ? 18 : 22, y2: 26 });
  if (major) {
    add(grid, 'line', { class: 'g', x1: x, x2: x, y1: 0, y2: '100%' });
    if (i > 0) add(ruler, 'text', { x, y: 16, 'text-anchor': 'middle' }, (i / 20).toFixed(1));
  }
}
add(ruler, 'text', { x: 2, y: 16 }, 'hms');

/* Amplitude lines, channel by channel */
const gain = (db) => Math.pow(10, db / 20);
for (let ch = 0; ch < 2; ch++) {
  const mid = 25 + ch * 50;
  for (const db of [0, -3, -6, -9]) {
    for (const s of [-1, 1]) {
      const y = pct(mid + s * gain(db) * 25);
      add(grid, 'line', { class: 'g', x1: 0, x2: '100%', y1: y, y2: y });
    }
  }
  add(grid, 'rect', { x: 0, width: '100%', y: pct(mid - 6.65), height: '11.2%', fill: '#3fdca1' });
  add(grid, 'line', { x1: 0, x2: '100%', y1: pct(mid), y2: pct(mid), stroke: '#58dd9c' });
}
add(grid, 'rect', { x: 0, width: '100%', y: '49.8%', height: 3, fill: '#05340f' });
add(grid, 'line', { x1: 0, x2: '100%', y1: '50%', y2: '50%', stroke: '#6f8f6c' });
add(grid, 'line', { x1: at(1.493), x2: at(1.493), y1: 0, y2: '100%', stroke: '#8a1018', 'stroke-dasharray': '2 3' });
add(grid, 'line', { x1: at(0.863), x2: at(0.863), y1: 0, y2: '100%', stroke: '#d00010' });

[[0.863, 1], [1.493, 0.6]].forEach(([time, opacity]) => {
  const holder = add(ruler, 'svg', { x: at(time), y: 12, overflow: 'visible', opacity });
  add(holder, 'use', { href: '#i-marker', x: -6, width: 12, height: 14 });
});

/* Decibel scales */
document.querySelectorAll('.dbs').forEach((svg) => {
  const named = [-3, -6, -9, -15, -21];
  for (let db = 0; db >= -21; db--) {
    const major = db === 0 || named.includes(db);
    for (const s of [-1, 1]) {
      const y = 50 + s * gain(db) * 50;
      add(svg, 'line', { x1: 0, x2: major ? 4 : 2, y1: pct(y), y2: pct(y) });
      if (named.includes(db)) add(svg, 'text', { x: 7, y: pct(y), dy: 4 }, '\u2013' + -db);
    }
  }
  add(svg, 'line', { x1: 0, x2: 4, y1: '50%', y2: '50%' });
  add(svg, 'text', { x: 7, y: '50%', dy: 4 }, '\u2013\u221e');
  add(svg, 'text', { x: 6, y: 12 }, 'dB');
});
```
